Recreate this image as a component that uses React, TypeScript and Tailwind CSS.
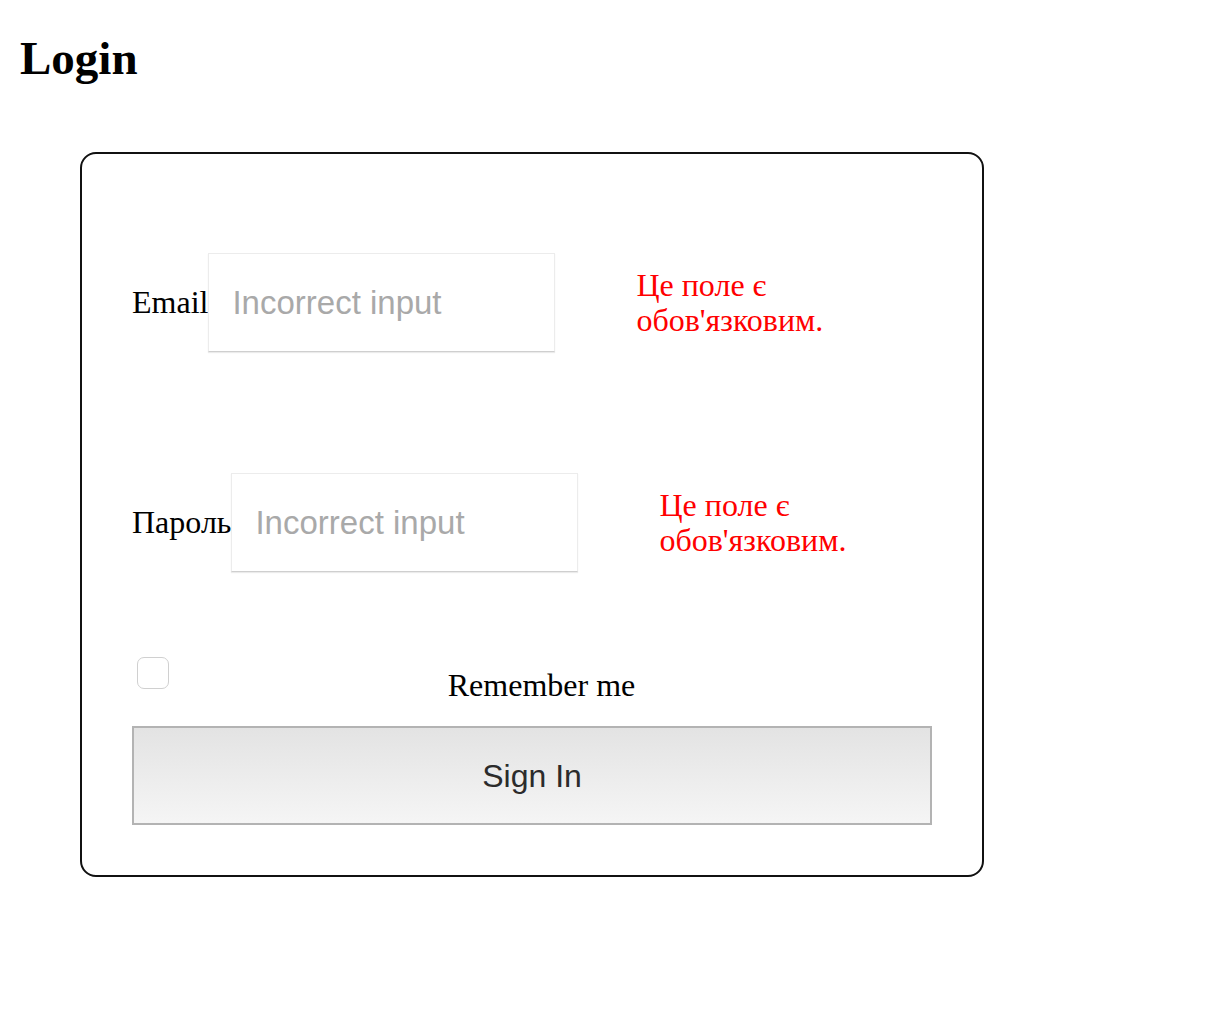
import { useState } from "react"

const serif = "font-['Liberation_Serif','Times_New_Roman',serif]"
const sans = "font-['Liberation_Sans',Arial,sans-serif]"

function Field({ label, type }: { label: string; type: string }) {
	return (
		<div className="flex items-center h-[99px]">
			<label className={`${serif} text-[32px] leading-[35px] text-black`}>{label}</label>
			<input
				type={type}
				placeholder="Incorrect input"
				className={`${sans} w-[347px] h-[99px] px-[23px] text-[33px] text-[#333] placeholder:text-[#a9a9a9] bg-white border border-[#ececec] border-b-[#cfcfcf] shadow-[0_1px_1px_rgba(0,0,0,0.08)] outline-none`}
			/>
			<div className={`${serif} ml-[81px] w-[200px] text-[32px] leading-[35px] text-[#ff0000]`}>
				Це поле є обов'язковим.
			</div>
		</div>
	)
}

export default function App() {
	const [remember, setRemember] = useState(false)

	return (
		<div className="min-h-[1032px] bg-white">
			<h1 className={`${serif} ml-[20px] pt-[31px] text-[47px] leading-[54px] font-bold text-black`}>Login</h1>
			<div className="ml-[80px] mt-[67px] w-[904px] rounded-[16px] border-2 border-[#111] pt-[99px] pb-[50px] px-[50px]">
				<Field label="Email" type="email" />
				<div className="h-[121px]" />
				<Field label="Пароль" type="password" />
				<div className="flex items-start mt-[85px]">
					<input
						type="checkbox"
						checked={remember}
						onChange={() => setRemember(!remember)}
						className="appearance-none ml-[5px] w-[32px] h-[32px] rounded-[7px] border border-[#d0d0d0] bg-white"
					/>
					<span className={`${serif} flex-1 text-center pr-[18px] mt-[11px] text-[32px] leading-[35px] text-black`}>Remember me</span>
				</div>
				<button
					className={`${sans} mt-[23px] w-full h-[99px] border-2 border-[#b3b3b3] bg-gradient-to-b from-[#e3e3e3] to-[#f5f5f5] text-[32px] text-[#2b2b2b]`}
				>
					Sign In
				</button>
			</div>
		</div>
	)
}
